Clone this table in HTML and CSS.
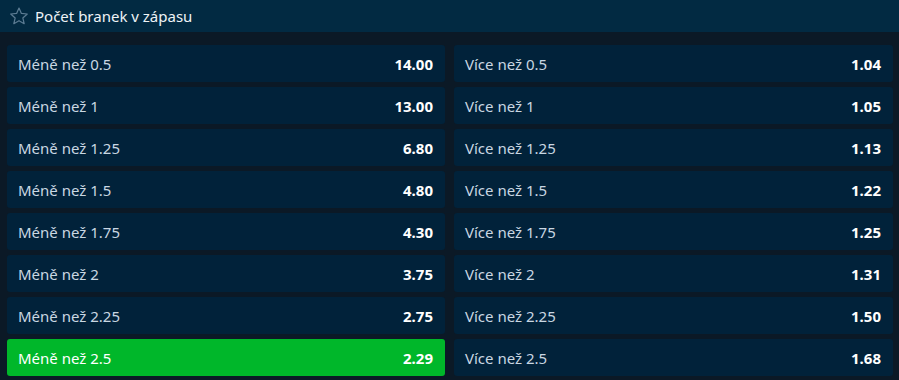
FILE: index.html
```html
<!DOCTYPE html>
<html lang="cs">
<head>
<meta charset="utf-8">
<link rel="stylesheet" href="styles.css">
</head>
<body>
<div class="header">
  <svg class="star" width="20" height="20" viewBox="0 0 24 24"><path d="M12 2.5l2.9 6.4 7 .7-5.3 4.7 1.6 6.9L12 17.6l-6.2 3.6 1.6-6.9L2.1 9.6l7-.7z" fill="none" stroke="#5b7b92" stroke-width="1.5" stroke-linejoin="round"/></svg>
  <span class="title">Počet branek v zápasu</span>
</div>
<div class="grid">
  <div class="cell"><span class="lbl">Méně než 0.5</span><span class="odd">14.00</span></div>
  <div class="cell"><span class="lbl">Více než 0.5</span><span class="odd">1.04</span></div>
  <div class="cell"><span class="lbl">Méně než 1</span><span class="odd">13.00</span></div>
  <div class="cell"><span class="lbl">Více než 1</span><span class="odd">1.05</span></div>
  <div class="cell"><span class="lbl">Méně než 1.25</span><span class="odd">6.80</span></div>
  <div class="cell"><span class="lbl">Více než 1.25</span><span class="odd">1.13</span></div>
  <div class="cell"><span class="lbl">Méně než 1.5</span><span class="odd">4.80</span></div>
  <div class="cell"><span class="lbl">Více než 1.5</span><span class="odd">1.22</span></div>
  <div class="cell"><span class="lbl">Méně než 1.75</span><span class="odd">4.30</span></div>
  <div class="cell"><span class="lbl">Více než 1.75</span><span class="odd">1.25</span></div>
  <div class="cell"><span class="lbl">Méně než 2</span><span class="odd">3.75</span></div>
  <div class="cell"><span class="lbl">Více než 2</span><span class="odd">1.31</span></div>
  <div class="cell"><span class="lbl">Méně než 2.25</span><span class="odd">2.75</span></div>
  <div class="cell"><span class="lbl">Více než 2.25</span><span class="odd">1.50</span></div>
  <div class="cell selected"><span class="lbl">Méně než 2.5</span><span class="odd">2.29</span></div>
  <div class="cell"><span class="lbl">Více než 2.5</span><span class="odd">1.68</span></div>
</div>
</body>
</html>
```
FILE: styles.css
```css
html, body {
  margin: 0;
  padding: 0;
  background: #0b1926;
  font-family: "Noto Sans", "Open Sans", sans-serif;
  overflow: hidden;
}
.header {
  height: 32px;
  background: #022a42;
  display: flex;
  align-items: center;
  padding-left: 9px;
  gap: 6px;
}
.star {
  display: block;
}
.title {
  color: #eef3f6;
  font-size: 15px;
}
.grid {
  display: grid;
  grid-template-columns: 438px 439px;
  column-gap: 9px;
  row-gap: 5px;
  padding: 13px 6px 0 7px;
}
.cell {
  height: 37px;
  background: #01223a;
  border-radius: 3px;
  display: flex;
  align-items: center;
  justify-content: space-between;
  padding: 0 12px 0 11px;
  box-sizing: border-box;
}
.lbl {
  color: #c9d7e2;
  font-size: 15px;
}
.odd {
  color: #ffffff;
  font-size: 15px;
  font-weight: 700;
}
.selected {
  background: #00b72a;
}
.selected .lbl {
  color: #ffffff;
}
```
